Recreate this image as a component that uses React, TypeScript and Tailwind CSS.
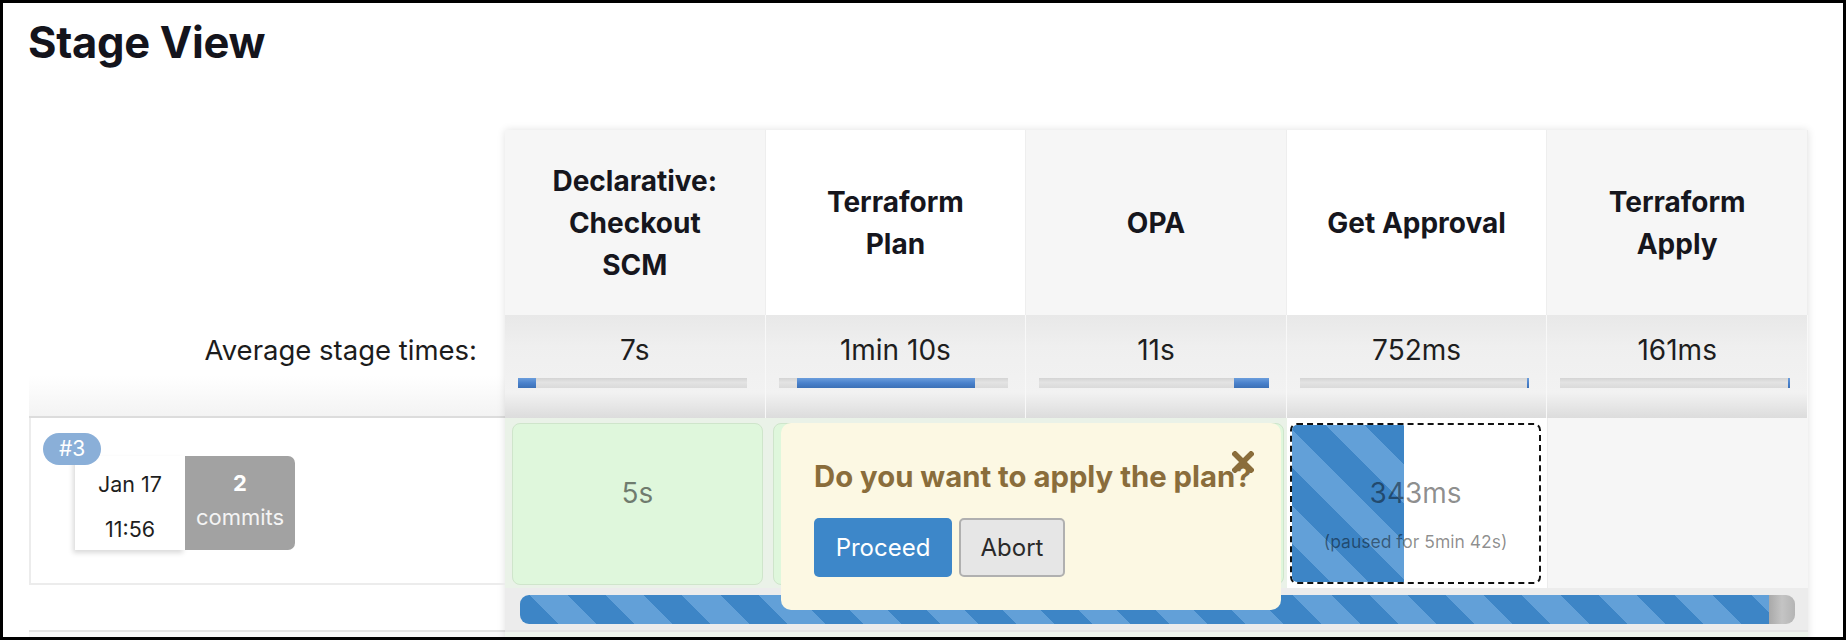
import React from "react";

interface Stage {
  name: string[];
  avg: string;
  start: number;
  width: number;
  headBg: string;
}

const stages: Stage[] = [
  { name: ["Declarative:", "Checkout", "SCM"], avg: "7s", start: 0, width: 18, headBg: "bg-[#f6f6f6]" },
  { name: ["Terraform", "Plan"], avg: "1min 10s", start: 18, width: 178, headBg: "bg-white" },
  { name: ["OPA"], avg: "11s", start: 195, width: 35, headBg: "bg-[#f6f6f6]" },
  { name: ["Get Approval"], avg: "752ms", start: 227, width: 2, headBg: "bg-white" },
  { name: ["Terraform", "Apply"], avg: "161ms", start: 228, width: 2, headBg: "bg-[#f6f6f6]" },
];

const stripes =
  "bg-[repeating-linear-gradient(45deg,#3d85c6_0px,#3d85c6_27px,#62a0d8_27px,#62a0d8_54px)]";

const SuccessCell = ({ time }: { time?: string }) => (
  <div className="h-full bg-[#eaf2e8] pl-[7px] pr-[3px] pt-[5px] pb-[3px]">
    <div className="h-full rounded-[8px] border border-[#cfe5cb] bg-[#dff7dc] pt-[52px] text-center text-[28px] leading-[34px] text-black/50">
      {time}
    </div>
  </div>
);

const App: React.FC = () => {
  return (
    <div className="relative w-[1846px] h-[640px] overflow-hidden border-[3px] border-black bg-white font-['Inter',sans-serif] text-[#222]">
      <h1 className="ml-[25px] mt-[17px] h-[44px] text-[43.5px] leading-[44px] font-bold tracking-[-0.3px] text-[#14141c]">
        Stage View
      </h1>

      <div className="ml-[26px] mt-[66px] flex">
        {/* left panel */}
        <div className="w-[476px] flex flex-col">
          <div className="h-[185px]" />
          <div className="h-[103px] border-b-2 border-[#dcdcdc] bg-[linear-gradient(to_bottom,#ffffff_60%,#f3f3f3)] pt-[18px] pr-[28px] text-right text-[27.5px] leading-[34px] text-[#1c1c1c]">
            Average stage times:
          </div>
          <div className="relative h-[167px] border-l-2 border-b-2 border-[#ececec]">
            <span className="absolute left-[12px] top-[15px] z-10 rounded-full bg-[#8aafd8] px-[16px] text-[21px] leading-[32px] text-white">
              #3
            </span>
            <div className="ml-[44px] mt-[38px] flex h-[94px]">
              <div className="w-[110px] bg-white shadow-[-2px_3px_5px_rgba(0,0,0,0.15)] flex flex-col items-center pt-[15px] text-[21.5px] leading-[26px] text-[#1e1e1e]">
                <span>Jan 17</span>
                <span className="mt-[19px]">11:56</span>
              </div>
              <div className="w-[110px] rounded-r-[7px] bg-[#a2a2a2] flex flex-col items-center pt-[14px] text-white">
                <span className="text-[22px] leading-[26px] font-bold">2</span>
                <span className="mt-[8px] text-[22px] leading-[26px] text-[#f4f4f4]">commits</span>
              </div>
            </div>
          </div>
          <div className="h-[45px]" />
          <div className="h-[10px] border-t-2 border-[#e2e2e2] bg-[#f7f7f7]" />
        </div>

        {/* stage table */}
        <div className="w-[1303px] flex flex-col shadow-[0_0_8px_rgba(0,0,0,0.12)]">
          <div className="grid grid-cols-5 h-[185px]">
            {stages.map((s, i) => (
              <div
                key={i}
                className={`${s.headBg} flex flex-col items-center justify-center border-r border-[#eeeeee] text-center text-[28px] leading-[42px] font-bold text-[#16161d]`}
              >
                {s.name.map((line) => (
                  <span key={line}>{line}</span>
                ))}
              </div>
            ))}
          </div>

          <div className="grid grid-cols-5 h-[103px]">
            {stages.map((s, i) => (
              <div
                key={i}
                className="border-r border-[#f8f8f8] bg-[linear-gradient(to_bottom,#e8e8e8,#efefef_30%,#f2f2f2_75%,#dcdcdc)] pt-[18px]"
              >
                <div className="text-center text-[28px] leading-[34px] text-[#1e1e1e]">{s.avg}</div>
                <div className="relative ml-[13px] mt-[11px] h-[10px] w-[229px] bg-[linear-gradient(to_bottom,#d4d4d4,#e3e3e3_45%,#dadada)]">
                  <div
                    className="absolute top-0 h-full bg-[linear-gradient(to_bottom,#6b9ddc,#4a82cc_50%,#3c70b6)]"
                    style={{ left: s.start, width: s.width }}
                  />
                </div>
              </div>
            ))}
          </div>

          <div className="grid grid-cols-5 h-[170px]">
            <SuccessCell time="5s" />
            <SuccessCell />
            <SuccessCell />
            <div className="h-full bg-white pl-[3px] pr-[6px] pt-[5px] pb-[4px]">
              <div className="relative h-full overflow-hidden rounded-[7px] border-2 border-dashed border-[#111] bg-white">
                <div className={`absolute left-0 top-0 h-full w-[112px] ${stripes}`} />
                <div className="relative flex flex-col items-center pt-[51px] text-black/45">
                  <span className="text-[28px] leading-[34px]">343ms</span>
                  <span className="mt-[21px] text-[17.5px] leading-[22px]">(paused for 5min 42s)</span>
                </div>
              </div>
            </div>
            <div className="h-full bg-[#f6f6f6] border-l border-[#ececec]" />
          </div>

          <div className="h-[42px] bg-[#ececec] pl-[15px] pr-[13px] pt-[7px]">
            <div className="flex h-[29px] overflow-hidden rounded-[9px]">
              <div className={`flex-1 ${stripes}`} />
              <div className="w-[26px] bg-[linear-gradient(to_right,#a9a9a9,#c4c4c4_50%,#b4b4b4)]" />
            </div>
          </div>
          <div className="h-[10px] border-t-2 border-[#e4e4e4] bg-[#eef4ec]" />
        </div>
      </div>

      {/* approval popup */}
      <div className="absolute left-[778px] top-[420px] w-[500px] h-[187px] rounded-[10px] bg-[#fcf8e3] pl-[33px] pt-[37px]">
        <svg
          className="absolute right-[27px] top-[28px]"
          width="22"
          height="22"
          viewBox="0 0 22 22"
        >
          <path d="M3 3 L19 19 M19 3 L3 19" stroke="#8a6d3b" strokeWidth="5.5" strokeLinecap="square" />
        </svg>
        <div className="text-[29.3px] leading-[34px] font-bold text-[#8a6d3b]">
          Do you want to apply the plan?
        </div>
        <div className="mt-[24px] flex gap-[7px]">
          <button className="h-[59px] w-[138px] rounded-[5px] bg-[#3d87c9] text-[24px] text-white">
            Proceed
          </button>
          <button className="h-[59px] w-[106px] rounded-[5px] border-2 border-[#b0b0b0] bg-[#e6e6e6] text-[24px] text-[#2a2a2a]">
            Abort
          </button>
        </div>
      </div>
    </div>
  );
};

export default App;
